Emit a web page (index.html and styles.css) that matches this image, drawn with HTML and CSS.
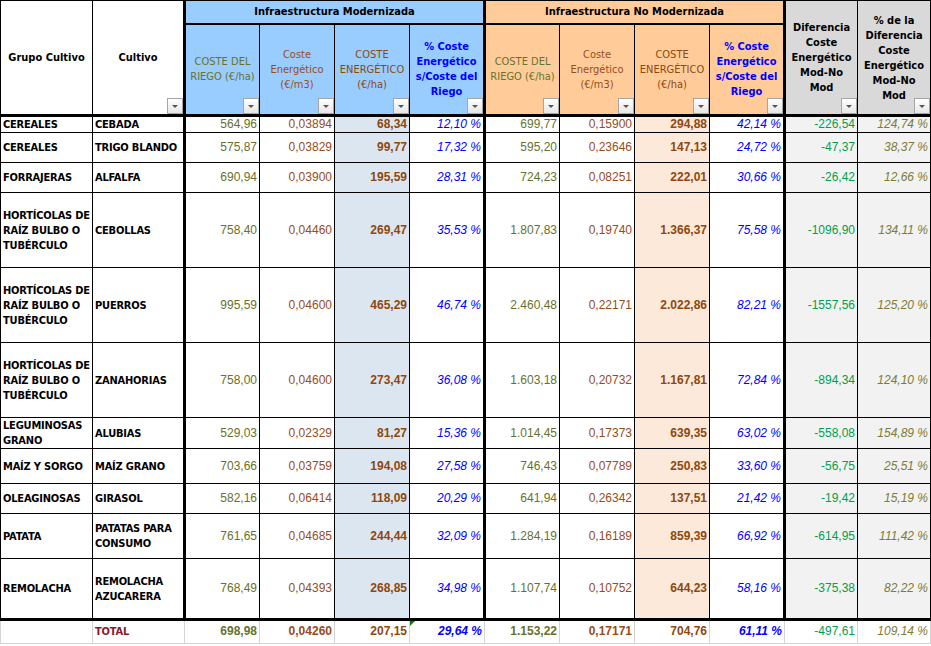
FILE: index.html
```html
<!DOCTYPE html>
<html lang="es">
<head>
<meta charset="utf-8">
<title>Coste energético</title>
<link rel="stylesheet" href="styles.css">
</head>
<body>
<table class="sheet">
  <colgroup>
    <col class="w92"><col class="w92">
    <col class="w75"><col class="w75"><col class="w75"><col class="w75">
    <col class="w75"><col class="w75"><col class="w75"><col class="w75">
    <col class="w73"><col class="w73">
  </colgroup>
  <thead>
    <tr class="h-grp">
      <th rowspan="2" class="hd tb">Grupo Cultivo</th>
      <th rowspan="2" class="hd tb">Cultivo<span class="flt"></span></th>
      <th colspan="4" class="grp blue tl">Infraestructura Modernizada</th>
      <th colspan="4" class="grp orange tl">Infraestructura No Modernizada</th>
      <th rowspan="2" class="hd grey tl tb">Diferencia<br>Coste<br>Energético<br>Mod-No<br>Mod<span class="flt"></span></th>
      <th rowspan="2" class="hd grey tb">% de la<br>Diferencia<br>Coste<br>Energético<br>Mod-No<br>Mod<span class="flt"></span></th>
    </tr>
    <tr class="h-sub">
      <th class="sh blue tl tb c-olive">COSTE DEL<br>RIEGO (€/ha)<span class="flt"></span></th>
      <th class="sh blue tb c-rust">Coste<br>Energético<br>(€/m3)<span class="flt"></span></th>
      <th class="sh blue tb c-brown">COSTE<br>ENERGÉTICO<br>(€/ha)<span class="flt"></span></th>
      <th class="sh blue tb c-blue b">% Coste<br>Energético<br>s/Coste del<br>Riego<span class="flt"></span></th>
      <th class="sh orange tl tb c-olive">COSTE DEL<br>RIEGO (€/ha)<span class="flt"></span></th>
      <th class="sh orange tb c-rust">Coste<br>Energético<br>(€/m3)<span class="flt"></span></th>
      <th class="sh orange tb c-brown">COSTE<br>ENERGÉTICO<br>(€/ha)<span class="flt"></span></th>
      <th class="sh orange tb c-blue b">% Coste<br>Energético<br>s/Coste del<br>Riego<span class="flt"></span></th>
    </tr>
  </thead>
  <tbody>
    <tr class="h17">
      <td class="lbl">CEREALES</td><td class="lbl">CEBADA</td>
      <td class="n c-olive tl">564,96</td><td class="n c-rust">0,03894</td><td class="n c-brown b bg-blue">68,34</td><td class="n c-blue i">12,10 %</td>
      <td class="n c-olive tl">699,77</td><td class="n c-rust">0,15900</td><td class="n c-brown b bg-orange">294,88</td><td class="n c-blue i">42,14 %</td>
      <td class="n c-green bg-grey tl">-226,54</td><td class="n c-khaki i bg-grey">124,74 %</td>
    </tr>
    <tr class="h30">
      <td class="lbl">CEREALES</td><td class="lbl">TRIGO BLANDO</td>
      <td class="n c-olive tl">575,87</td><td class="n c-rust">0,03829</td><td class="n c-brown b bg-blue">99,77</td><td class="n c-blue i">17,32 %</td>
      <td class="n c-olive tl">595,20</td><td class="n c-rust">0,23646</td><td class="n c-brown b bg-orange">147,13</td><td class="n c-blue i">24,72 %</td>
      <td class="n c-green bg-grey tl">-47,37</td><td class="n c-khaki i bg-grey">38,37 %</td>
    </tr>
    <tr class="h30">
      <td class="lbl">FORRAJERAS</td><td class="lbl">ALFALFA</td>
      <td class="n c-olive tl">690,94</td><td class="n c-rust">0,03900</td><td class="n c-brown b bg-blue">195,59</td><td class="n c-blue i">28,31 %</td>
      <td class="n c-olive tl">724,23</td><td class="n c-rust">0,08251</td><td class="n c-brown b bg-orange">222,01</td><td class="n c-blue i">30,66 %</td>
      <td class="n c-green bg-grey tl">-26,42</td><td class="n c-khaki i bg-grey">12,66 %</td>
    </tr>
    <tr class="h75">
      <td class="lbl">HORTÍCOLAS DE<br>RAÍZ BULBO O<br>TUBÉRCULO</td><td class="lbl">CEBOLLAS</td>
      <td class="n c-olive tl">758,40</td><td class="n c-rust">0,04460</td><td class="n c-brown b bg-blue">269,47</td><td class="n c-blue i">35,53 %</td>
      <td class="n c-olive tl">1.807,83</td><td class="n c-rust">0,19740</td><td class="n c-brown b bg-orange">1.366,37</td><td class="n c-blue i">75,58 %</td>
      <td class="n c-green bg-grey tl">-1096,90</td><td class="n c-khaki i bg-grey">134,11 %</td>
    </tr>
    <tr class="h75">
      <td class="lbl">HORTÍCOLAS DE<br>RAÍZ BULBO O<br>TUBÉRCULO</td><td class="lbl">PUERROS</td>
      <td class="n c-olive tl">995,59</td><td class="n c-rust">0,04600</td><td class="n c-brown b bg-blue">465,29</td><td class="n c-blue i">46,74 %</td>
      <td class="n c-olive tl">2.460,48</td><td class="n c-rust">0,22171</td><td class="n c-brown b bg-orange">2.022,86</td><td class="n c-blue i">82,21 %</td>
      <td class="n c-green bg-grey tl">-1557,56</td><td class="n c-khaki i bg-grey">125,20 %</td>
    </tr>
    <tr class="h75">
      <td class="lbl">HORTÍCOLAS DE<br>RAÍZ BULBO O<br>TUBÉRCULO</td><td class="lbl">ZANAHORIAS</td>
      <td class="n c-olive tl">758,00</td><td class="n c-rust">0,04600</td><td class="n c-brown b bg-blue">273,47</td><td class="n c-blue i">36,08 %</td>
      <td class="n c-olive tl">1.603,18</td><td class="n c-rust">0,20732</td><td class="n c-brown b bg-orange">1.167,81</td><td class="n c-blue i">72,84 %</td>
      <td class="n c-green bg-grey tl">-894,34</td><td class="n c-khaki i bg-grey">124,10 %</td>
    </tr>
    <tr class="h30">
      <td class="lbl">LEGUMINOSAS<br>GRANO</td><td class="lbl">ALUBIAS</td>
      <td class="n c-olive tl">529,03</td><td class="n c-rust">0,02329</td><td class="n c-brown b bg-blue">81,27</td><td class="n c-blue i">15,36 %</td>
      <td class="n c-olive tl">1.014,45</td><td class="n c-rust">0,17373</td><td class="n c-brown b bg-orange">639,35</td><td class="n c-blue i">63,02 %</td>
      <td class="n c-green bg-grey tl">-558,08</td><td class="n c-khaki i bg-grey">154,89 %</td>
    </tr>
    <tr class="h35">
      <td class="lbl">MAÍZ Y SORGO</td><td class="lbl">MAÍZ GRANO</td>
      <td class="n c-olive tl">703,66</td><td class="n c-rust">0,03759</td><td class="n c-brown b bg-blue">194,08</td><td class="n c-blue i">27,58 %</td>
      <td class="n c-olive tl">746,43</td><td class="n c-rust">0,07789</td><td class="n c-brown b bg-orange">250,83</td><td class="n c-blue i">33,60 %</td>
      <td class="n c-green bg-grey tl">-56,75</td><td class="n c-khaki i bg-grey">25,51 %</td>
    </tr>
    <tr class="h30">
      <td class="lbl">OLEAGINOSAS</td><td class="lbl">GIRASOL</td>
      <td class="n c-olive tl">582,16</td><td class="n c-rust">0,06414</td><td class="n c-brown b bg-blue">118,09</td><td class="n c-blue i">20,29 %</td>
      <td class="n c-olive tl">641,94</td><td class="n c-rust">0,26342</td><td class="n c-brown b bg-orange">137,51</td><td class="n c-blue i">21,42 %</td>
      <td class="n c-green bg-grey tl">-19,42</td><td class="n c-khaki i bg-grey">15,19 %</td>
    </tr>
    <tr class="h45">
      <td class="lbl">PATATA</td><td class="lbl">PATATAS PARA<br>CONSUMO</td>
      <td class="n c-olive tl">761,65</td><td class="n c-rust">0,04685</td><td class="n c-brown b bg-blue">244,44</td><td class="n c-blue i">32,09 %</td>
      <td class="n c-olive tl">1.284,19</td><td class="n c-rust">0,16189</td><td class="n c-brown b bg-orange">859,39</td><td class="n c-blue i">66,92 %</td>
      <td class="n c-green bg-grey tl">-614,95</td><td class="n c-khaki i bg-grey">111,42 %</td>
    </tr>
    <tr class="h61">
      <td class="lbl">REMOLACHA</td><td class="lbl">REMOLACHA<br>AZUCARERA</td>
      <td class="n c-olive tl">768,49</td><td class="n c-rust">0,04393</td><td class="n c-brown b bg-blue">268,85</td><td class="n c-blue i">34,98 %</td>
      <td class="n c-olive tl">1.107,74</td><td class="n c-rust">0,10752</td><td class="n c-brown b bg-orange">644,23</td><td class="n c-blue i">58,16 %</td>
      <td class="n c-green bg-grey tl">-375,38</td><td class="n c-khaki i bg-grey">82,22 %</td>
    </tr>
  </tbody>
  <tfoot>
    <tr class="total">
      <td class="lbl"></td><td class="lbl c-maroon">TOTAL</td>
      <td class="n c-olive b">698,98</td><td class="n c-rust b">0,04260</td><td class="n c-brown b">207,15</td><td class="n c-blue b i mark">29,64 %</td>
      <td class="n c-olive b">1.153,22</td><td class="n c-rust b">0,17171</td><td class="n c-brown b">704,76</td><td class="n c-blue b i">61,11 %</td>
      <td class="n c-green">-497,61</td><td class="n c-khaki i">109,14 %</td>
    </tr>
  </tfoot>
</table>
</body>
</html>
```

FILE: styles.css
```css
html, body {
  margin: 0;
  padding: 0;
  background: #ffffff;
}

.sheet {
  border-collapse: collapse;
  table-layout: fixed;
  width: 930px;
  font-family: "Liberation Sans", Arial, sans-serif;
  font-size: 12px;
  color: #000;
}

.w92 { width: 92px; }
.w75 { width: 75px; }
.w73 { width: 73px; }

.sheet th,
.sheet td {
  border: 1px solid #000;
  padding: 0 2px;
  vertical-align: middle;
  overflow: hidden;
  white-space: nowrap;
  line-height: 15px;
}

.sheet th {
  position: relative;
  text-align: center;
  font-family: "DejaVu Sans Condensed", "DejaVu Sans", sans-serif;
  font-stretch: condensed;
  font-size: 11px;
}

.hd { font-weight: bold; }
.sh { font-weight: normal; }
.grp {
  font-weight: bold;
  border-bottom: 2px solid #000 !important;
}

.h-grp { height: 23px; }
.h-sub { height: 92px; }
.h17 { height: 17px; }
.h30 { height: 30px; }
.h35 { height: 35px; }
.h45 { height: 45px; }
.h61 { height: 61px; }
.h75 { height: 75px; }

.tl { border-left: 3px solid #000 !important; }
.tb { border-bottom: 3px solid #000 !important; }

.blue { background: #99ccff; }
.orange { background: #ffcc99; }
.grey { background: #d9d9d9; }

.bg-blue { background: #dce6f1; }
.bg-orange { background: #fde9d9; }
.bg-grey { background: #f2f2f2; }

.lbl {
  text-align: left;
  font-family: "DejaVu Sans Condensed", "DejaVu Sans", sans-serif;
  font-stretch: condensed;
  font-weight: bold;
  font-size: 11px;
  letter-spacing: -0.2px;
}

.n { text-align: right; }
.b { font-weight: bold; }
.i { font-style: italic; }

.c-olive { color: #66722c; }
.c-rust { color: #984c1a; }
.c-brown { color: #8c480f; }
.c-blue { color: #0000ff; }
.c-green { color: #00a04e; }
.c-khaki { color: #7c7c36; }
.c-maroon { color: #8b1a2e; }

.flt {
  position: absolute;
  right: 0;
  bottom: 0;
  width: 14px;
  height: 14px;
  border: 1px solid #a6a6a6;
  background: linear-gradient(#ffffff, #e6e6e6);
}

.flt::after {
  content: "";
  position: absolute;
  left: 4px;
  top: 6px;
  border-left: 3px solid transparent;
  border-right: 3px solid transparent;
  border-top: 3px solid #555;
}

.total { height: 24px; }

.total td {
  border: 1px solid #d4d4d4;
  border-top: 3px solid #000;
  padding-bottom: 1px;
}

.mark { position: relative; }
.mark::before {
  content: "";
  position: absolute;
  left: 0;
  top: 0;
  border-top: 5px solid #008000;
  border-right: 5px solid transparent;
}
```
